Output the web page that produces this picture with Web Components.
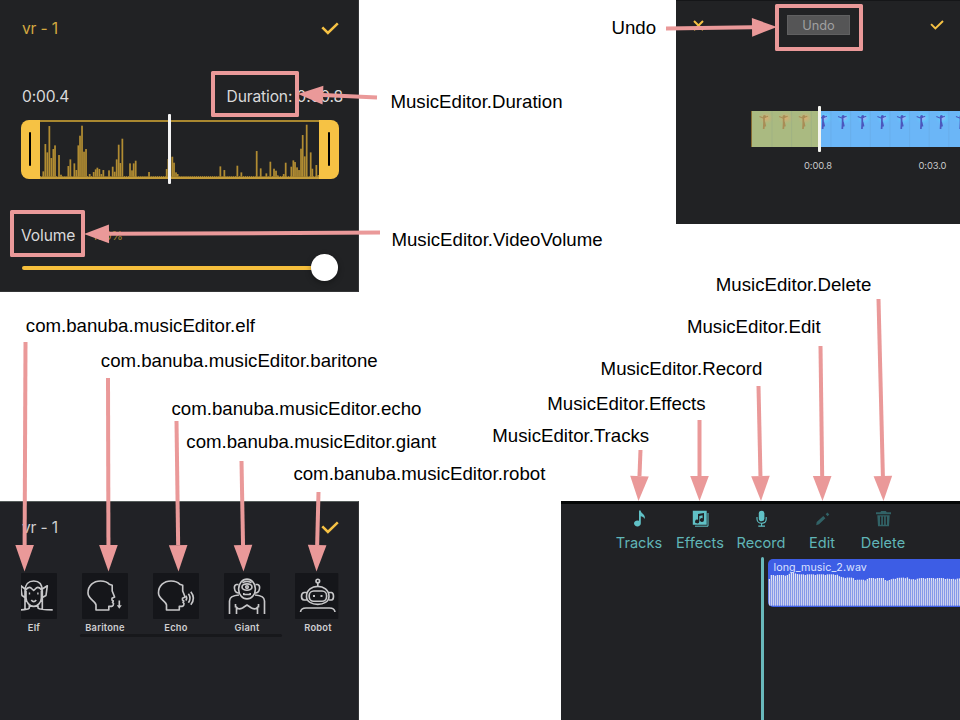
<!DOCTYPE html>
<html lang="en">
<head>
<meta charset="utf-8">
<title>Music editor identifiers</title>
<style>
html,body{margin:0;padding:0;background:#fff;width:960px;height:720px;overflow:hidden}
</style>
</head>
<body>
<identifier-map></identifier-map>
<script>
const define = (name, render) => customElements.define(name, class extends HTMLElement {
  constructor() { super(); this.attachShadow({ mode: 'open' }); }
  connectedCallback() { this.shadowRoot.innerHTML = render(this); }
});
const attr = (el, n, d = '') => el.getAttribute(n) ?? d;

define('check-mark', () => `
<style>:host{display:block}svg{display:block;width:100%;height:100%}</style>
<svg viewBox="0 0 18 13" fill="none" stroke="#f6c244" stroke-width="2.5"><path d="M1.3 5.3 L6.9 11 L16.8 1.3"/></svg>`);

/* Free-canvas items: text notes, outline frames and arrows */
define('canvas-note', el => `
<style>:host{display:block;position:absolute;left:${attr(el,'x')}px;top:${attr(el,'y')}px;
font:18.67px/22px "Liberation Sans",Arial,sans-serif;color:#000;white-space:nowrap}</style><slot></slot>`);

define('focus-frame', el => `
<style>:host{display:block;position:absolute;box-sizing:border-box;left:${attr(el,'x')}px;top:${attr(el,'y')}px;
width:${attr(el,'w')}px;height:${attr(el,'h')}px;border:4px solid #ea9999;border-radius:1.5px}</style>`);

define('arrow-layer', el => {
  const arrows = attr(el,'arrows').trim().split(';').filter(Boolean).map(s => s.trim().split(/\s+/).map(Number));
  return `<style>:host{display:block;position:absolute;inset:0;pointer-events:none}svg{display:block}</style>
<svg width="960" height="720">${arrows.map(([x1,y1,x2,y2,l]) => {
    const d = Math.hypot(x2-x1,y2-y1), ux=(x2-x1)/d, uy=(y2-y1)/d, bx=x2-ux*l, by=y2-uy*l;
    return `<path d="M${x1} ${y1}L${bx} ${by}" stroke="#ea9999" stroke-width="4"/><path d="M${x2} ${y2}L${bx-uy*9.3} ${by+ux*9.3}L${bx+uy*9.3} ${by-ux*9.3}Z" fill="#ea9999"/>`;
  }).join('')}</svg>`;
});

/* Trim range with amplitude bars: [x, top] in thirds of a pixel */
const AMP = [[130,182],[136,100],[142,125],[148,46],[154,142],[160,115],[165,104],[177,133],[183,192],[205,166],[211,146],[223,158],[229,178],[235,104],[240,75],[246,45],[252,123],[258,115],[269,190],[281,184],[287,176],[292,171],[298,175],[304,190],[310,178],[327,179],[338,168],[344,183],[350,146],[356,102],[361,157],[367,84],[390,158],[396,179],[401,158],[407,150],[447,184],[500,175],[505,145],[511,140],[517,138],[522,156],[528,185],[533,190],
[661,167],[673,178],[712,165],[724,185],[770,121],[782,173],[799,188],[811,153],[822,174],[828,180],[833,194],[851,190],[857,156],[874,168],[880,149],[885,154],[891,170],[897,178],[903,114],[908,73],[914,137],[920,42],[932,125],[937,174],[949,163],[955,193]];
define('trim-wave', () => `
<style>:host{display:flex;position:relative;box-sizing:border-box;width:318px;height:59px}
.grip{width:19.5px;background:#f6c244;display:grid;place-items:center;flex:none}
.grip.l{border-radius:8px 0 0 8px}.grip.r{border-radius:0 8px 8px 0}
.grip i{width:2px;height:34px;background:#000;border-radius:1px}
.mid{flex:1;box-sizing:border-box;border-top:2px solid #a98830;border-bottom:2px solid #c29a38}
svg{display:block;width:100%;height:55px}
.head{position:absolute;left:147.5px;top:-6px;width:3.2px;height:70px;background:#f4f4f4;border-radius:1px}</style>
<div class="grip l"><i></i></div>
<div class="mid"><svg viewBox="40 121.3 279 55" preserveAspectRatio="none" fill="#b18c32">
${AMP.map(([x,t]) => `<rect x="${(x/3-.85).toFixed(2)}" y="${(110+t/3).toFixed(2)}" width="1.75" height="${((200-t)/3).toFixed(2)}"/>`).join('')}
<path d="M40 175.8H319" stroke="#9d7d2e" stroke-width="1.2" stroke-dasharray="1.4 .55"/></svg></div>
<div class="grip r"><i></i></div><div class="head"></div>`);

define('volume-slider', () => `
<style>:host{display:flex;align-items:center;width:316px;height:27px}
.line{flex:1;height:4px;border-radius:2px;background:#f6bf3c;margin-right:-2px}
.thumb{width:26.6px;height:26.6px;border-radius:50%;background:#fff;box-shadow:0 2px 6px #0005}</style>
<div class="line"></div><div class="thumb"></div>`);

define('trim-screen', () => `
<style>:host{display:flex;flex-direction:column;box-sizing:border-box;width:359px;height:292px;background:#212224;
padding:19px 21px 0;font:15.6px/20px Inter,"Liberation Sans",sans-serif;color:#d9d9da;border-right:1px solid #343537;border-bottom:1px solid #343537}
.row{display:flex;justify-content:space-between;align-items:center;height:20px;padding:0 0 0 1px}
.title{color:#d4a940;letter-spacing:-.15px}check-mark{width:18px;height:13px;margin-top:-1px;margin-right:-2px}
.times{margin:48px -6px 0 0;letter-spacing:-.15px}trim-wave{margin-top:12.5px;margin-left:-.5px}
.volume{justify-content:flex-start;gap:17px;margin-top:47.5px;padding:0;letter-spacing:-.15px}small{font-size:12px;color:#a98330;letter-spacing:-.3px}
volume-slider{margin:8px 0 0 1px}</style>
<div class="row"><span class="title">vr - 1</span><check-mark></check-mark></div>
<div class="row times"><span>0:00.4</span><span>Duration: 0:00.8</span></div>
<trim-wave></trim-wave>
<div class="row volume"><span>Volume</span><small>100%</small></div>
<volume-slider></volume-slider>`);

define('video-strip', () => {
  const dancers = Array.from({length:11},(_,i) => {
    const x = 13 + i*19.65, g = i < 3, c = g ? '#a98d55' : '#4b57bd';
    return `<ellipse cx="${x+2}" cy="7" rx="8" ry="7" fill="url(#${g?'g':'b'})"/>
<path d="M${x-4.5} 5.4L${x-1} 7L${x+4} 5.2" stroke="${c}" stroke-width="1.1" fill="none"/><path d="M${x} 6V12L${x-.3} 18M${x+.3} 11L${x+1.3} 15.5" stroke="${c}" stroke-width="1.7" fill="none"/><circle cx="${x+.5}" cy="5.6" r="1.5" fill="${c}"/><path d="M${x+8} 0V36" stroke="#597b9a" stroke-opacity=".12"/>`;
  }).join('');
  return `<style>:host{display:block;position:relative;width:209px;height:36px}svg{display:block}
.head{position:absolute;left:67px;top:-5px;width:2.7px;height:46px;border-radius:1px;background:#f5f5ef}</style>
<svg width="209" height="36"><defs><radialGradient id="g"><stop stop-color="#dfab70"/><stop offset="1" stop-color="#b5b77c" stop-opacity="0"/></radialGradient>
<radialGradient id="b"><stop stop-color="#a7aef8"/><stop offset=".5" stop-color="#62c9fb" stop-opacity=".8"/><stop offset="1" stop-color="#6bbaf8" stop-opacity="0"/></radialGradient></defs>
<rect width="68" height="36" fill="#aaba81"/><rect x="68" width="141" height="36" fill="#6bb6f7"/>${dancers}<rect width="1" height="36" fill="#876c32"/></svg><div class="head"></div>`;
});

define('timeline-screen', () => `
<style>:host{display:flex;flex-direction:column;box-sizing:border-box;width:284px;height:224px;background:#212224;border-top:1px solid #151618;
font:16px Inter,"Liberation Sans",sans-serif;color:#c9cacb}
.bar{display:grid;grid-template-columns:1fr 63px 1fr;align-items:center;padding:14px 16px 0 17px;height:20px}
.bar svg{width:11px;height:11px}check-mark{width:14px;height:10px;justify-self:end}
button{height:20px;width:63px;border:1px solid #606061;background:#555556;color:#a0a0a1;padding:0;font:12.8px/17px Inter,sans-serif;letter-spacing:0}
video-strip{margin:76px 0 0 75px}
.ticks{display:flex;gap:84.5px;padding:12.5px 0 0 127px;font-size:9.4px;line-height:12px;letter-spacing:-.1px;white-space:nowrap}.ticks span{width:30px;text-align:center}</style>
<div class="bar"><svg viewBox="0 0 11 11"><path d="M1 1L10 10M10 1L1 10" stroke="#f6c244" stroke-width="2"/></svg><button>Undo</button><check-mark></check-mark></div>
<video-strip></video-strip><div class="ticks"><span>0:00.8</span><span>0:03.0</span></div>`);

const HEAD = '<path d="M14 37V32C14 28 6 26.5 6 20C6 12.5 11.5 8 18.5 8C22 8 25 8.4 27.3 11.2L30.2 12.2V18L32.6 24L30 25.2V27L31.3 28L30.5 29.5L31.5 30.5C31.5 33 30.5 33.6 26.8 33.3V37Z"/>';
const FACES = {
  elf: '<path d="M14 36V18C14 11.5 17.5 8 22.7 8C28 8 31.3 11.5 31.3 18V36M14.3 17.5Q17.5 13.2 20 15L22.7 17.5L25.3 15Q28 13.2 31 17.5M15 18V25C15 29.5 19 33.3 22.7 33.3C26.5 33.3 30.4 29.5 30.4 25V18M14 16L9.5 12.5L11 22.5L14 24.5M31.3 16L36.3 12.8L35 22.5L31.3 24.5M18.3 31.5V35Q17 36.8 10 36.8M27 31.5V35Q28.5 36.8 41.7 36.8M20.3 27Q22.7 30.2 25.2 27"/><path d="M17.8 20.6H19.2M26.2 20.6H27.6" stroke-width="2"/>',
  baritone: HEAD + '<path d="M37.3 27.5V34"/><path d="M34.8 32.3H39.8L37.3 35.8Z" fill="#c7c7c9" stroke="none"/>',
  echo: HEAD.replace('<path ', '<path transform="translate(-.5 0)" ') + '<path d="M32.8 22.8Q34.6 25.2 32.8 27.6M35.4 20.8Q38.6 25.2 35.4 29.7M37.8 18.7Q43 25.2 37.8 31.8"/>',
  giant: '<ellipse cx="23" cy="16" rx="8.4" ry="9.9"/><ellipse cx="23" cy="14" rx="5" ry="3.2"/><circle cx="23" cy="14" r="1.3"/><path d="M18.5 9.8Q23 7 27.5 9.8M14.5 11.5H12.5Q10 12 10.5 15.5Q11 20 15 20M31.5 11.5H33.5Q36 12 35.5 15.5Q35 20 31 20M19.8 20V21.5H26.2V20M15 22Q5.5 22.5 5.5 28V41M31 22Q40.5 22.5 40.5 28V41M12.5 41V34Q14 37 18.5 35L23 32L27.5 35Q32 37 33.5 34V41M11.5 34.5V31M34.5 34.5V31"/>',
  robot: '<circle cx="22.8" cy="8" r="1.8"/><path d="M22.8 10V14M11.5 23.5C11.5 10 34 10 34 23.5C34 34 11.5 34 11.5 23.5ZM11.5 19.5H9Q6.5 20 6.5 23.3Q6.5 27 9 27H12M34 19.5H36.5Q38.5 20 38.5 23.3Q38.5 27 36.5 27H34M5.5 39Q6 35 11 35H34.5Q39.5 35 40 39"/><rect x="14.2" y="18" width="17.4" height="10.2" rx="4.5"/><path d="M19 22V24M26.5 22V24" stroke-width="2"/>'
};
define('voice-tile', el => {
  const n = attr(el,'kind'), l = n === 'elf' ? 10 : 0, w = n === 'robot' ? 43.3 : 46;
  return `<style>:host{display:flex;flex-direction:column;align-items:center;width:46px;color:#cfcfd1;font:600 9.3px/12px Inter,"Liberation Sans",sans-serif}
svg{display:block;width:46px;height:46px}.label{margin-top:2.5px;letter-spacing:.22px}</style>
<svg viewBox="0 0 46 46"><clipPath id="c"><rect x="${l}" width="${w-l}" height="46" rx="1"/></clipPath><g clip-path="url(#c)"><rect width="46" height="46" fill="#15161a"/><g fill="none" stroke="#c7c7c9" stroke-width="1.65" stroke-linejoin="round">${FACES[n]}</g></g></svg><div class="label"><slot></slot></div>`;
});

define('voices-screen', () => `
<style>:host{display:flex;flex-direction:column;box-sizing:border-box;width:359px;height:219px;background:#212226;border-top:1px solid #565d5b;border-right:1px solid #343537;
padding-top:16px;font:15.6px/20px Inter,"Liberation Sans",sans-serif;color:#d0d0d1;letter-spacing:-.15px}
.row{display:flex;justify-content:space-between;align-items:center;padding:0 19px 0 22px;height:20px}check-mark{width:18px;height:13px;margin-top:-1px}
.tiles{display:flex;gap:25px;padding:35px 0 0 11px}.scroll{margin:.5px 0 0 80px;width:202px;height:3px;background:#17181b;border-radius:2px}</style>
<div class="row"><span>vr - 1</span><check-mark></check-mark></div>
<div class="tiles"><voice-tile kind="elf">Elf</voice-tile><voice-tile kind="baritone">Baritone</voice-tile><voice-tile kind="echo">Echo</voice-tile><voice-tile kind="giant">Giant</voice-tile><voice-tile kind="robot">Robot</voice-tile></div>
<div class="scroll"></div>`);

const TOOLS = {
  tracks: '<path d="M8 .5H9.6C10.2 4 15 4.4 13.7 9C12.8 7 11.2 6.3 9.8 6.2V13.2A3.4 3 0 1 1 8 10.8Z"/>',
  effects: '<path fill-rule="evenodd" d="M.8 .8H14.7V14.7H.8ZM6 4V9.7A2.1 1.9 0 1 0 7.3 11.5V6L10.6 5.3V8.2A2.1 1.9 0 1 0 12 10V3Z"/><path d="M16 3V16.2H3" fill="none" stroke="currentColor" stroke-width="1"/>',
  record: '<rect x="5.8" y=".7" width="5.6" height="10.5" rx="2.8"/><path d="M4 7V9C4 14.6 13.2 14.6 13.2 9V7M8.6 13V16M5.3 16.1H12" fill="none" stroke="currentColor" stroke-width="1.1"/>',
  edit: '<path d="M2.2 15.2L2.7 12L9.3 6L11.4 8.2L5 14.2ZM11.7 4.2L13.4 2.6L15.3 4.4L13.6 6.2Z"/>',
  delete: '<path d="M1 2.2H5.2L6.2 1H10.8L11.8 2.2H16V4.2H1ZM2.3 5.2H14.7L14 16.3H3Z"/><path d="M5.6 6.5V14.7M8.5 6.5V14.7M11.4 6.5V14.7" stroke="#212225" stroke-width="1.2"/>'
};
define('tool-button', el => `
<style>:host{display:flex;flex-direction:column;align-items:center;gap:7px;width:61px;color:#60b5b7;font:14.6px/18px Inter,"Liberation Sans",sans-serif;letter-spacing:.02px}
svg{display:block;width:17px;height:17px;color:${el.hasAttribute('dim')?'#316266':'#60c1c6'}}</style>
<svg viewBox="0 0 17 17" fill="currentColor">${TOOLS[attr(el,'icon')]}</svg><span><slot></slot></span>`);

define('audio-clip', () => {
  const pts = [[0,240],[4,228],[58,228],[62,221],[80,221],[85,226],[203,226],[208,231],[220,235],[250,236],[260,242],[290,242],[300,237],[345,237],[352,246],[365,241],[380,237],[415,235],[422,241],[440,240],[455,237],[520,237],[545,240],[575,238]];
  const top = x => { let i=1; while(i<pts.length-1 && pts[i][0]<x) i++; const [a,b]=pts[i-1],[c,d]=pts[i]; return b+(d-b)*(x-a)/(c-a); };
  const bars = Array.from({length:97},(_,i) => { const y=(top(i*6)-180)/3 + (i%5===3 ? .7 : 0); return `<rect x="${.7+i*2}" y="${y.toFixed(1)}" width="1.35" height="${(46.6-y).toFixed(1)}"/>`; }).join('');
  return `<style>:host{display:grid;width:192px;height:48px;background:#3d5de5;border-radius:5px 0 0 5px;overflow:hidden;color:#dce2ff;font:10.7px/18px Inter,"Liberation Sans",sans-serif}
svg,span{grid-area:1/1}span{padding-left:5px;letter-spacing:.08px}</style><svg width="192" height="48"><g fill="#e0e3f2">${bars}</g><path d="M1 22H192V46.5H1Z" fill="#a8b3ea" opacity=".35"/></svg><span>long_music_2.wav</span>`;
});

define('mixer-screen', () => `
<style>:host{display:flex;flex-direction:column;box-sizing:border-box;width:399px;height:219px;background:#212225;border-top:3px solid #050707;padding-top:6px}
.tools{display:flex;padding-left:47.5px}
.lane{display:flex;align-items:flex-start;gap:4.7px;padding:5px 0 0 199.5px;flex:1}.head{width:3.3px;align-self:stretch;background:#69b9bc;border-radius:2px 2px 0 0;flex:none}audio-clip{margin-top:2px;flex:none}</style>
<div class="tools"><tool-button icon="tracks">Tracks</tool-button><tool-button icon="effects">Effects</tool-button><tool-button icon="record">Record</tool-button><tool-button icon="edit" dim>Edit</tool-button><tool-button icon="delete" dim>Delete</tool-button></div>
<div class="lane"><div class="head"></div><audio-clip></audio-clip></div>`);

define('identifier-map', () => `
<style>:host{display:block;position:relative;width:960px;height:720px;background:#fff;overflow:hidden}
.screen{position:absolute}</style>
<trim-screen class="screen" style="left:0;top:0"></trim-screen>
<timeline-screen class="screen" style="left:676px;top:0"></timeline-screen>
<voices-screen class="screen" style="left:0;top:501px"></voices-screen>
<mixer-screen class="screen" style="left:561px;top:501px"></mixer-screen>
<canvas-note x="611.5" y="17">Undo</canvas-note>
<canvas-note x="390.4" y="91">MusicEditor.Duration</canvas-note>
<canvas-note x="391.4" y="229">MusicEditor.VideoVolume</canvas-note>
<canvas-note x="715.8" y="274">MusicEditor.Delete</canvas-note>
<canvas-note x="686.9" y="316">MusicEditor.Edit</canvas-note>
<canvas-note x="600.6" y="358">MusicEditor.Record</canvas-note>
<canvas-note x="547.3" y="393">MusicEditor.Effects</canvas-note>
<canvas-note x="492.3" y="425">MusicEditor.Tracks</canvas-note>
<canvas-note x="25.8" y="315">com.banuba.musicEditor.elf</canvas-note>
<canvas-note x="100.8" y="350">com.banuba.musicEditor.baritone</canvas-note>
<canvas-note x="171.5" y="398">com.banuba.musicEditor.echo</canvas-note>
<canvas-note x="186.3" y="431">com.banuba.musicEditor.giant</canvas-note>
<canvas-note x="293.4" y="463">com.banuba.musicEditor.robot</canvas-note>
<focus-frame x="211" y="71" w="88" h="46"></focus-frame>
<focus-frame x="10" y="210" w="75" h="47"></focus-frame>
<focus-frame x="775" y="4" w="88" h="47"></focus-frame>
<arrow-layer arrows="377 97.5 298 94 25;380 232.5 84 234 25;666 28.5 777 27 25;
25.5 342 24.5 571.5 26.5;108 378 108.5 571.5 26.5;176.5 421 178.5 571.5 26.5;241.5 461 243.5 571.5 26.5;318.5 492 316.5 571.5 26.5;
640.5 450 638.5 501 25;699.5 420 699.5 501 25;758.5 386 761 501 25;820.5 346 822.5 501 25;878.5 299 883.5 501 25"></arrow-layer>`);
</script>
</body>
</html>
